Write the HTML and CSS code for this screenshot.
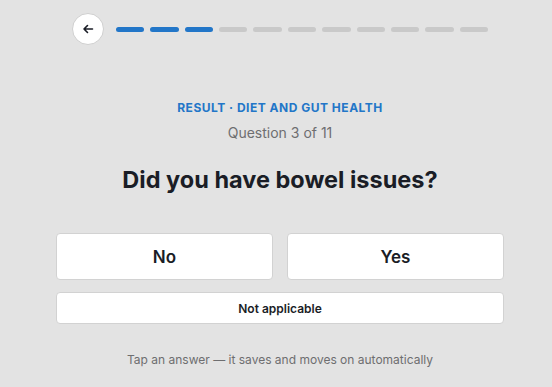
FILE: index.html
```html
<!DOCTYPE html>
<html lang="en">
<head>
  <meta charset="UTF-8">
  <meta name="viewport" content="width=device-width, initial-scale=1.0">
  <title>Questionnaire</title>
  <link rel="stylesheet" href="styles.css">
</head>
<body>
  <div class="quiz">
    <div class="topbar">
      <button class="btn-back" aria-label="Back">
        <svg width="12" height="12" viewBox="0 0 12 12"><path d="M10.5 6H2M5.5 2.5L2 6l3.5 3.5" fill="none" stroke="#1a1d26" stroke-width="1.6" stroke-linecap="round" stroke-linejoin="round"/></svg>
      </button>
      <div class="progress">
        <span class="step done"></span>
        <span class="step done"></span>
        <span class="step done"></span>
        <span class="step"></span>
        <span class="step"></span>
        <span class="step"></span>
        <span class="step"></span>
        <span class="step"></span>
        <span class="step"></span>
        <span class="step"></span>
        <span class="step"></span>
      </div>
    </div>

    <p class="section">Result · Diet and gut health</p>
    <p class="counter">Question 3 of 11</p>
    <h1 class="question">Did you have bowel issues?</h1>

    <div class="answers">
      <button class="answer">No</button>
      <button class="answer">Yes</button>
    </div>
    <button class="answer-na">Not applicable</button>

    <p class="hint">Tap an answer — it saves and moves on automatically</p>
  </div>
</body>
</html>
```

FILE: styles.css
```css
body {
  margin: 0;
  padding-left: 8px;
  background: #e3e3e3;
  font-family: Inter, "Noto Sans", sans-serif;
  color: #1a1d26;
}

.quiz {
  max-width: 448px;
  margin: 0 auto;
}

.topbar {
  display: flex;
  align-items: center;
  gap: 12px;
  padding: 13px 16px 0;
}

.btn-back {
  width: 32px;
  height: 32px;
  flex: none;
  border-radius: 50%;
  border: 1px solid #cfcfcf;
  background: #fff;
  padding: 0;
  display: flex;
  align-items: center;
  justify-content: center;
  cursor: pointer;
}

.progress {
  flex: 1;
  display: flex;
  gap: 6px;
}

.step {
  flex: 1;
  height: 5px;
  border-radius: 3px;
  background: #c9c9c9;
}

.step.done {
  background: #2276c8;
}

.section {
  margin: 55px 0 0;
  text-align: center;
  font-size: 12px;
  font-weight: 700;
  letter-spacing: 0.5px;
  text-transform: uppercase;
  color: #2276c8;
}

.counter {
  margin: 9px 0 0;
  text-align: center;
  font-size: 14px;
  color: #6e6e70;
}

.question {
  margin: 24px 0 0;
  text-align: center;
  font-size: 23.5px;
  font-weight: 700;
  line-height: 29px;
}

.answers {
  display: grid;
  grid-template-columns: 1fr 1fr;
  gap: 14px;
  margin-top: 39px;
}

.answer, .answer-na {
  background: #fff;
  border: 1px solid #d2d2d2;
  border-radius: 4px;
  font-family: inherit;
  color: #1a1d26;
  font-weight: 600;
  cursor: pointer;
}

.answer {
  height: 47px;
  font-size: 17px;
}

.answer-na {
  display: block;
  width: 100%;
  height: 32px;
  margin-top: 12px;
  font-size: 12px;
}

.hint {
  margin: 28px 0 0;
  text-align: center;
  font-size: 12px;
  color: #6e6e70;
}
```
